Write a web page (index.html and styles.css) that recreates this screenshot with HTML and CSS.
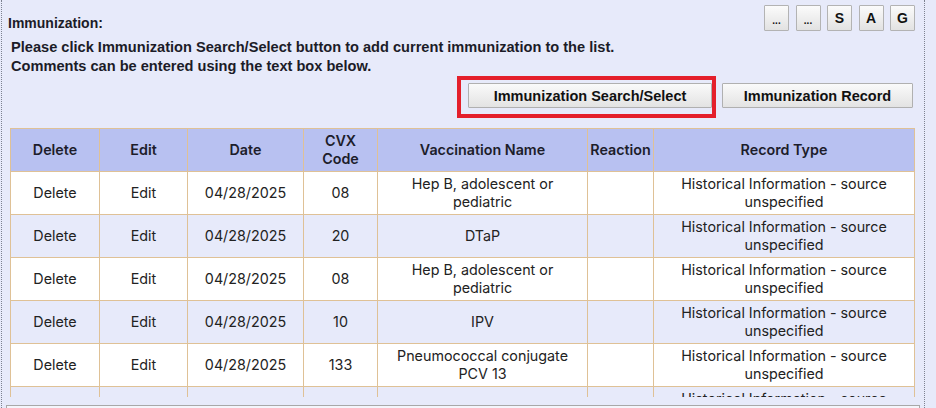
FILE: index.html
```html
<!DOCTYPE html>
<html>
<head>
<meta charset="utf-8">
<link rel="stylesheet" href="styles.css">
</head>
<body>
<div class="panel">
  <div class="top-row">
    <div class="title">Immunization:</div>
    <div class="mini-buttons">
      <button class="mini dots">...</button>
      <button class="mini dots">...</button>
      <button class="mini">S</button>
      <button class="mini">A</button>
      <button class="mini">G</button>
    </div>
  </div>
  <p class="instructions">Please click Immunization Search/Select button to add current immunization to the list.<br>Comments can be entered using the text box below.</p>
  <div class="actions">
    <div class="highlight"><button class="btn btn-search">Immunization Search/Select</button></div>
    <button class="btn btn-record">Immunization Record</button>
  </div>
  <div class="table-wrap">
    <table class="grid">
      <colgroup>
        <col class="c-del"><col class="c-edit"><col class="c-date"><col class="c-cvx"><col class="c-name"><col class="c-react"><col class="c-type">
      </colgroup>
      <thead>
        <tr><th>Delete</th><th>Edit</th><th>Date</th><th>CVX<br>Code</th><th>Vaccination Name</th><th>Reaction</th><th>Record Type</th></tr>
      </thead>
      <tbody>
        <tr><td>Delete</td><td>Edit</td><td>04/28/2025</td><td>08</td><td class="name">Hep B, adolescent or pediatric</td><td></td><td>Historical Information - source unspecified</td></tr>
        <tr class="alt"><td>Delete</td><td>Edit</td><td>04/28/2025</td><td>20</td><td class="name">DTaP</td><td></td><td>Historical Information - source unspecified</td></tr>
        <tr><td>Delete</td><td>Edit</td><td>04/28/2025</td><td>08</td><td class="name">Hep B, adolescent or pediatric</td><td></td><td>Historical Information - source unspecified</td></tr>
        <tr class="alt"><td>Delete</td><td>Edit</td><td>04/28/2025</td><td>10</td><td class="name">IPV</td><td></td><td>Historical Information - source unspecified</td></tr>
        <tr><td>Delete</td><td>Edit</td><td>04/28/2025</td><td>133</td><td class="name">Pneumococcal conjugate PCV 13</td><td></td><td>Historical Information - source unspecified</td></tr>
        <tr class="alt"><td></td><td></td><td></td><td></td><td class="name"></td><td></td><td>Historical Information - source unspecified</td></tr>
      </tbody>
    </table>
  </div>
  <textarea class="comments"></textarea>
</div>
</body>
</html>
```
FILE: styles.css
```css
html, body {
  margin: 0;
  padding: 0;
  background: #e7eafa;
}
body {
  font-family: "Liberation Sans", Arial, sans-serif;
  color: #1c1c28;
  overflow: hidden;
  height: 408px;
}
.panel {
  margin-left: 1px;
  width: 906px;
  height: 403px;
  padding: 5px 8px 0 8px;
  border-left: 1px dotted #7d8290;
  border-right: 1px dotted #7d8290;
}
.top-row {
  display: flex;
  justify-content: space-between;
  align-items: flex-start;
}
.title {
  margin-top: 10px;
  margin-left: -2px;
  font-size: 14px;
  line-height: 16px;
  font-weight: bold;
}
.mini-buttons {
  display: flex;
  gap: 6.5px;
  margin-right: 1px;
}
.mini {
  width: 25px;
  height: 26px;
  margin: 0;
  padding: 0;
  border: 1px solid #b3b3b3;
  border-radius: 1px;
  background: linear-gradient(#fbfbfb, #e2e2e2);
  font-family: "Liberation Sans", Arial, sans-serif;
  font-weight: bold;
  font-size: 14px;
  color: #111;
}
.mini.dots {
  font-size: 10px;
  padding-top: 4px;
}
.instructions {
  margin: 7px 0 0 1px;
  font-size: 14.6px;
  line-height: 19px;
  font-weight: bold;
}
.actions {
  display: flex;
  justify-content: flex-end;
  gap: 10px;
  margin-top: 7px;
  margin-right: 3px;
}
.highlight {
  position: relative;
}
.highlight::after {
  content: "";
  position: absolute;
  left: -11px;
  right: -4px;
  top: -7px;
  bottom: -10px;
  border: 4px solid #e41f2b;
  pointer-events: none;
}
.btn {
  height: 25px;
  margin: 0;
  padding: 0;
  border: 1px solid #b0b0b0;
  border-radius: 1px;
  background: linear-gradient(#fafafa, #e3e3e3);
  font-family: "Liberation Sans", Arial, sans-serif;
  font-weight: bold;
  font-size: 14.5px;
  color: #111;
}
.btn-search { width: 244px; }
.btn-record { width: 191px; }
.table-wrap {
  margin-top: 20px;
  height: 269px;
  overflow: hidden;
}
.grid {
  width: 904px;
  table-layout: fixed;
  border-collapse: collapse;
  font-family: Inter, "Noto Sans", sans-serif;
  font-size: 14.3px;
  line-height: 18px;
  color: #222;
}
.c-del { width: 89px; }
.c-edit { width: 88px; }
.c-date { width: 116px; }
.c-cvx { width: 74px; }
.c-name { width: 210px; }
.c-react { width: 66px; }
.c-type { width: 261px; }
.grid th, .grid td {
  border: 1px solid #dfc196;
  text-align: center;
  vertical-align: middle;
  padding: 3px 2px;
  height: 36px;
}
.grid td.name {
  padding: 3px 16px;
}
.grid th {
  background: #b8c1f1;
  font-weight: 600;
  color: #1d1d2b;
}
.grid td {
  background: #ffffff;
}
.grid tr.alt td {
  background: #e7eafa;
}
.comments {
  display: block;
  box-sizing: border-box;
  margin: 8px 0 0 -4px;
  width: 914px;
  height: 3px;
  padding: 0;
  border: 1px solid #a8a8a8;
  border-bottom: none;
  background: #f4f5fb;
  resize: none;
}
```
